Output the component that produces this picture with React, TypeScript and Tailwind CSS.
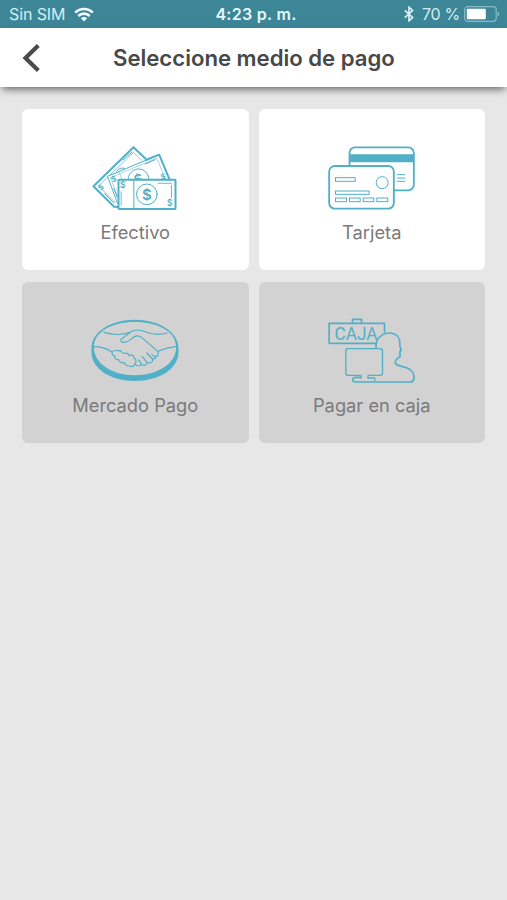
import type { ReactNode } from "react"

function CashIcon() {
  return (
    <svg viewBox="1.5 15 330 225" className="h-[75px] w-[110px]" fill="none" stroke="#4fb0c8" strokeWidth="6" strokeLinejoin="round" strokeLinecap="round">
      <path d="M114 216 L104 215 L42 154 L162 37 L199 72" />
      <path d="M108 203 L57 153 L162 52 L186 76" strokeWidth="2" />
      <path d="M76 176 L103 204 M130 75 L158 51" strokeWidth="3" />
      <path d="M112 108 q8 -12 22 -8" strokeWidth="3" />
      <path d="M114 205 L84 124 L239 59 L269 131" strokeWidth="3" fill="#fff" />
      <path d="M199 75 L239 59 L269 131" strokeWidth="6" />
      <path d="M113 181 L93 128 L232 69 L257 131 M119 112 L127 132" strokeWidth="1.5" />
      <path d="M197 87 L227 74 M103 160 L113 187" strokeWidth="3" />
      <path d="M147 140 A31 31 0 1 1 208 136" strokeWidth="3" />
      <g fill="#4fb0c8" stroke="none" fontFamily="Inter, sans-serif" fontWeight="600" textAnchor="middle">
        <text x="177" y="147" fontSize="40" transform="rotate(-18 177 133)">$</text>
        <text x="103" y="140" fontSize="24" transform="rotate(-20 103 132)">$</text>
        <text x="251" y="132" fontSize="22" transform="rotate(-20 251 124)">$</text>
        <text x="65" y="164" fontSize="22" transform="rotate(-45 65 157)">$</text>
      </g>
      <rect x="117" y="134" width="171" height="88" rx="2" fill="#fff" />
      <path d="M163 135 V221" strokeWidth="3" />
      <path d="M236 145 H276 M125 171 V211 M276 151 V188" strokeWidth="2.5" />
      <circle cx="202" cy="178" r="31" strokeWidth="3" />
      <g fill="#4fb0c8" stroke="none" fontFamily="Inter, sans-serif" fontWeight="600" textAnchor="middle">
        <text x="202" y="194" fontSize="45">$</text>
        <text x="130" y="160" fontSize="25">$</text>
        <text x="271" y="212" fontSize="25">$</text>
      </g>
    </svg>
  )
}

function CardIcon() {
  return (
    <svg viewBox="7.5 15 330 225" className="h-[75px] w-[110px]" fill="none" stroke="#4fb0c8" strokeWidth="5.5">
      <rect x="105" y="37" width="193" height="129" rx="17" />
      <path d="M105 70 H298" strokeWidth="24" />
      <rect x="44" y="93" width="194" height="128" rx="17" fill="#fff" />
      <g strokeWidth="3">
        <path d="M247 119 H272 M247 129 H272 M247 139 H272" />
        <rect x="63" y="128" width="59" height="11" />
        <circle cx="203" cy="143" r="18" />
        <rect x="63" y="168" width="101" height="10" />
        <rect x="63" y="189" width="33" height="11" />
        <rect x="105" y="189" width="32" height="11" />
        <rect x="146" y="189" width="32" height="11" />
        <rect x="187" y="189" width="33" height="11" />
      </g>
    </svg>
  )
}

function HandshakeIcon() {
  return (
    <svg viewBox="1.5 15 330 225" className="h-[75px] w-[110px]" fill="none" stroke="#4fb0c8" strokeWidth="3.5" strokeLinejoin="round" strokeLinecap="round">
      <path
        d="M36 120 C36 72 94 35 166 35 S297 72 297 120 V132 C297 183 238 219 166 219 S36 183 36 132 Z M43 118 C43 166 97 202 166 202 S290 166 290 118 S235 42 166 42 S43 71 43 118 Z"
        fill="#4fb0c8"
        fillRule="evenodd"
        stroke="none"
      />
      <path d="M73 73 C97 80 125 82 149 74" />
      <path d="M262 75 C235 83 214 78 197 71 C180 64 164 65 153 72 L125 94 C122 98 126 103 132 103 C142 103 150 98 158 91 C166 82 178 81 186 88 L231 127 C239 133 238 142 230 145 C225 147 220 143 217 140" />
      <path d="M42 116 C64 116 82 122 98 132 M291 115 C271 117 253 122 237 129" />
      <path d="M98 132 C103 124 112 129 118 128 C125 127 127 136 134 136 C142 134 147 137 149 143 C157 139 165 143 164 151 C171 153 171 161 167 166 C165 174 157 178 150 174 C143 174 137 170 135 164 C128 166 120 163 118 155 C110 156 104 151 106 144 C100 143 96 138 98 132 Z" />
      <path d="M167 169 C174 176 183 175 186 169 C184 163 180 159 177 156 M186 169 C195 175 204 171 202 163 L188 145 M202 163 C212 168 222 162 219 153 L202 135 M219 153 C224 153 229 149 230 145" />
    </svg>
  )
}

function CashierIcon() {
  return (
    <svg viewBox="7.5 15 330 225" className="h-[75px] w-[110px]" fill="none" stroke="#4fb0c8" strokeWidth="5" strokeLinejoin="round" strokeLinecap="round">
      <path d="M186 106 H44 V46 H210 V72" />
      <path d="M114 45 V34 H141 V45" />
      <text x="60" y="96" fontSize="54" fontFamily="Roboto, sans-serif" textLength="129" lengthAdjust="spacingAndGlyphs" fill="#4fb0c8" stroke="none">CAJA</text>
      <path d="M185 120 C181 93 203 74 227 75 C249 77 257 92 256 108 C254 115 259 119 260 127 L256 131 L257 145 C253 151 247 150 244 157 C240 164 243 170 251 172 L278 180 C294 186 300 200 298 213 C297 219 292 222 286 222 H122 C112 222 112 208 123 208 H139" />
      <rect x="94" y="122" width="110" height="80" rx="7" strokeWidth="4" />
      <path d="M140 202 V210 M160 202 V210 H181 V217" strokeWidth="4" />
      <path d="M143 202 H157" stroke="#d2d2d2" strokeWidth="6" />
    </svg>
  )
}

type MethodProps = {
  label: string
  disabled?: boolean
  children: ReactNode
}

function Method({ label, disabled, children }: MethodProps) {
  return (
    <button disabled={disabled} className={`flex h-[161px] flex-col items-center rounded-md pt-[31px] ${disabled ? "bg-[#d2d2d2]" : "bg-white"}`}>
      {children}
      <span className="mt-[3px] text-[18.3px] leading-7 text-[#7a7a7a]">{label}</span>
    </button>
  )
}

function StatusBar() {
  return (
    <div className="grid h-7 grid-cols-[1fr_auto_1fr] items-center bg-[#3c8698] pr-[7px] pl-[9px] text-[#d5edf3]">
      <div className="flex items-center gap-[9px]">
        <span className="text-[16px] leading-6 tracking-[-0.1px]">Sin SIM</span>
        <svg viewBox="0 0 20 15" className="h-[15px] w-5" fill="none" stroke="#f0fbff" strokeWidth="2.6">
          <path d="M1.2 5.7 C6 0.7 14 0.7 18.8 5.7" />
          <path d="M4.3 9 C7.5 5.8 12.5 5.8 15.7 9" />
          <path d="M10 14.4 L6.9 11.3 C8.7 9.6 11.3 9.6 13.1 11.3 Z" fill="#f0fbff" stroke="none" />
        </svg>
      </div>
      <span className="pl-[3px] text-[16px] font-semibold tracking-[0.3px] text-[#e6f7fb]">4:23 p. m.</span>
      <div className="flex items-center justify-end">
        <svg viewBox="0 0 10 16" className="mr-2 h-4 w-[10px]" fill="none" stroke="#e0f4f8" strokeWidth="1.6">
          <path d="M0.8 4.4 L8.6 11.4 L5 14.8 V1.2 L8.6 4.6 L0.8 11.6" />
        </svg>
        <span className="mr-1 text-[16px] tracking-[-0.3px]">70 %</span>
        <svg viewBox="0 0 36 16" className="h-4 w-9">
          <rect x="0.7" y="0.7" width="31.5" height="14.6" rx="3" fill="none" stroke="#86bbc8" strokeWidth="1.2" />
          <rect x="2.8" y="2.8" width="19" height="10.4" rx="1" fill="#fff" />
          <path d="M33.5 5.5 C35.8 6.3 35.8 9.7 33.5 10.5 Z" fill="#86bbc8" />
        </svg>
      </div>
    </div>
  )
}

export default function App() {
  return (
    <div className="min-h-[900px] bg-[#e7e7e7] font-['Inter',sans-serif]">
      <StatusBar />
      <header className="grid h-[59px] grid-cols-[113px_1fr] items-center bg-white shadow-[0_4px_8px_-2px_rgba(0,0,0,0.6)]">
        <button aria-label="Volver" className="pl-[22px]">
          <svg viewBox="0 0 20 28" className="h-7 w-5" fill="none" stroke="#4a4a4a" strokeWidth="4.2">
            <path d="M16.3 1.5 L3.5 14 L16.3 26.5" />
          </svg>
        </button>
        <h1 className="text-[22.2px] font-[560] tracking-[-0.03px] whitespace-nowrap text-[#484848]">Seleccione medio de pago</h1>
      </header>
      <main className="grid grid-cols-2 gap-x-[10px] gap-y-3 px-[22px] pt-[22px]">
        <Method label="Efectivo">
          <CashIcon />
        </Method>
        <Method label="Tarjeta">
          <CardIcon />
        </Method>
        <Method label="Mercado Pago" disabled>
          <HandshakeIcon />
        </Method>
        <Method label="Pagar en caja" disabled>
          <CashierIcon />
        </Method>
      </main>
    </div>
  )
}
